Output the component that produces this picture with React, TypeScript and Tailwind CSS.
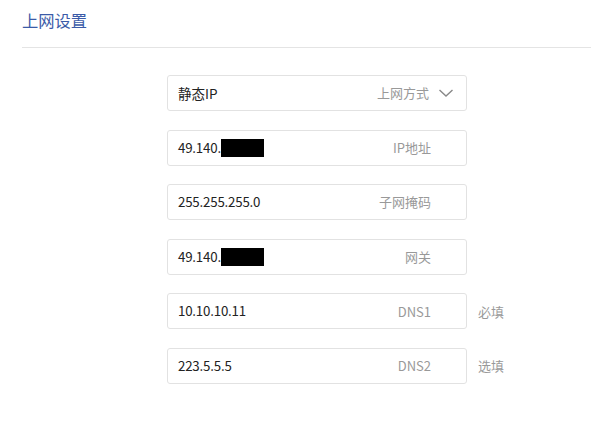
import React from 'react';

const font = '"Noto Sans CJK SC", "Liberation Sans", sans-serif';

type Row = { value: string; masked?: boolean; label: string; hint?: string };

const rows: Row[] = [
  { value: '49.140.', masked: true, label: 'IP地址' },
  { value: '255.255.255.0', label: '子网掩码' },
  { value: '49.140.', masked: true, label: '网关' },
  { value: '10.10.10.11', label: 'DNS1', hint: '必填' },
  { value: '223.5.5.5', label: 'DNS2', hint: '选填' },
];

export default function App() {
  return (
    <div className="w-[591px] h-[432px] bg-white overflow-hidden" style={{ fontFamily: font }}>
      <div className="pl-[22px]">
        <div className="h-[48px] pt-[8px] text-[16.3px] leading-[24px] text-[#3b5ba8] border-b border-[#e4e4e4]">
          上网设置
        </div>
      </div>

      <div className="pt-[27px] pl-[167px] flex flex-col gap-[18.6px]">
        <div className="w-[300px] h-[36px] border border-[#e2e2e2] rounded-[3px] flex items-center pl-[10px] pr-[12px]">
          <span className="text-[13.5px] text-[#222]">静态IP</span>
          <span className="ml-auto text-[13px] text-[#999]">上网方式</span>
          <svg width="16" height="10" viewBox="0 0 16 10" className="ml-[9px]">
            <path d="M1.5 2l6.5 6 6.5-6" fill="none" stroke="#888" strokeWidth="1.4" />
          </svg>
        </div>

        {rows.map((r) => (
          <div key={r.label} className="flex items-center">
            <div className="w-[300px] h-[36px] border border-[#e2e2e2] rounded-[3px] flex items-center pl-[10px] pr-[35px]">
              <span className="text-[13.3px] tracking-[-0.2px] text-[#222]">{r.value}</span>
              {r.masked && <span className="w-[43px] h-[18px] bg-black" />}
              <span className="ml-auto text-[13px] text-[#999]">{r.label}</span>
            </div>
            {r.hint && <span className="ml-[11px] text-[13px] text-[#999]">{r.hint}</span>}
          </div>
        ))}
      </div>
    </div>
  );
}
